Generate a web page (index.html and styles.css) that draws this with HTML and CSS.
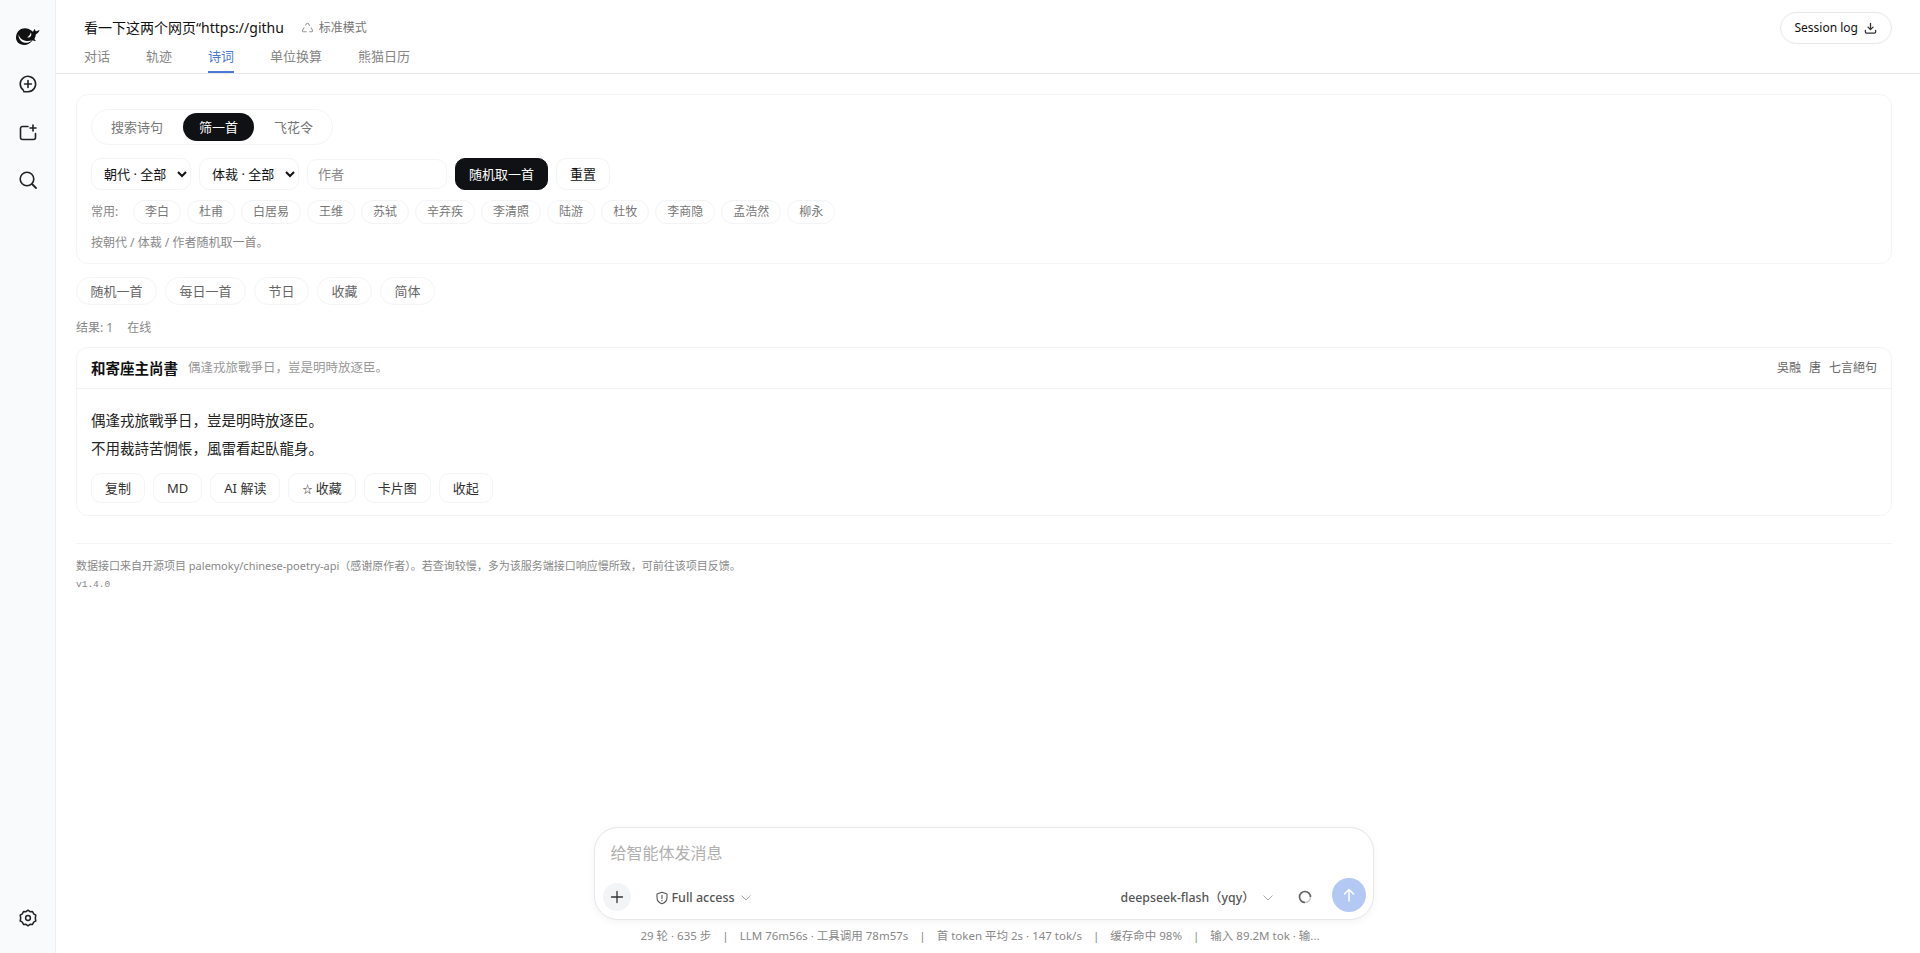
FILE: index.html

```html
<!DOCTYPE html>
<html lang="zh-CN">

<head>
    <meta charset="UTF-8">
    <meta name="viewport" content="width=device-width, initial-scale=1.0">
    <title>诗词</title>
    <link rel="stylesheet" href="styles.css">
</head>

<body>
    <aside class="sidebar">
        <svg class="logo" viewBox="0 0 24 18" width="24" height="18">
            <path d="M0 10C.5 4.500 4.500 1.200 9 1.200c2.300 0 4.300.7 6 2 .8.500 1.300 1 1.700 1.600.8-.7 1.300-1.500 1.500-2.800.8.700 1.300 1.500 1.500 2.300.8 0 2-.4 3.800-1.300-.5 2-1.700 3.500-3.600 4.300-.2 1.700-.7 3.400-1.500 4.700.4.900 1 1.500 1.800 2-1.400.3-2.600 0-3.600-.7C14.500 16.500 11.500 18 8 18 3 18-.3 14.500 0 10z" fill="#111"/>
            <path d="M2.500 7.500c1 3.800 4.500 6.500 9.500 6.500 1.500 0 2.800-.3 3.800-.8-1.800 2-4.300 2.800-6.800 2.600-3.600-.3-6.600-3.600-6.500-8.300z" fill="#f9fafb"/>
            <path d="M14.800 5.500c-.5 2.200-1.700 3.800-3.800 4.800 1.800.5 3.300-.2 4-1.600.5-1 .400-2.200-.2-3.200z" fill="#f9fafb"/>
        </svg>
        <svg class="side-icon" viewBox="0 0 20 20" width="20" height="20">
            <path d="M5.500 16.300A7.700 7.700 0 1 1 10 17.700H5.800" fill="none" stroke="#222" stroke-width="1.600" stroke-linecap="round"/>
            <path d="M10 6.600v6.800M6.600 10h6.800" stroke="#222" stroke-width="1.600" stroke-linecap="round"/>
        </svg>
        <svg class="side-icon folder" viewBox="0 0 20 20" width="20" height="20">
            <path d="M10 3.500H4.500a2 2 0 0 0-2 2v9a2 2 0 0 0 2 2h11a2 2 0 0 0 2-2V10.500" fill="none" stroke="#222" stroke-width="1.600" stroke-linecap="round"/>
            <path d="M15 2v6M12 5h6" stroke="#222" stroke-width="1.600" stroke-linecap="round"/>
        </svg>
        <svg class="side-icon" viewBox="0 0 20 20" width="20" height="20">
            <circle cx="9" cy="9" r="6.800" fill="none" stroke="#222" stroke-width="1.600"/>
            <path d="M14 14l4 4" stroke="#222" stroke-width="1.800" stroke-linecap="round"/>
        </svg>
        <svg class="side-icon gear" viewBox="0 0 20 20" width="20" height="20">
            <path d="M10 2.200l2 1.500 2.500-.1 1.200 2.200 2.100 1.400-.5 2.800.5 2.800-2.100 1.400-1.200 2.200-2.500-.1-2 1.500-2-1.500-2.500.1-1.200-2.200-2.100-1.400.5-2.800-.5-2.800 2.100-1.400 1.200-2.200 2.500.1z" fill="none" stroke="#222" stroke-width="1.500" stroke-linejoin="round"/>
            <circle cx="10" cy="10" r="2.400" fill="none" stroke="#222" stroke-width="1.500"/>
        </svg>
    </aside>

    <div class="main">
        <header class="topbar">
            <div class="topbar-left">
                <div class="title-row">
                    <span class="title">看一下这两个网页“https://githu</span>
                    <span class="mode">
                        <svg viewBox="0 0 14 14" width="13" height="13">
                            <path d="M5 3.300l1.200-1.700c.4-.5 1.200-.5 1.600 0l1.400 2.200M10.800 6.200l1.600 2.700c.4.700-.1 1.500-.8 1.500H9.300M5.800 10.400H2.400c-.7 0-1.200-.8-.8-1.500l1.700-2.800" fill="none" stroke="#999" stroke-width="1.100" stroke-linecap="round"/>
                        </svg>
                        标准模式
                    </span>
                </div>
                <nav class="tabs">
                    <a class="tab">对话</a>
                    <a class="tab">轨迹</a>
                    <a class="tab active">诗词</a>
                    <a class="tab">单位换算</a>
                    <a class="tab">熊猫日历</a>
                </nav>
            </div>
            <button class="session-btn">
                Session log
                <svg viewBox="0 0 14 14" width="13" height="13">
                    <path d="M7 1.500v6.500M4.300 5.500L7 8.200l2.700-2.700M1.500 9v1.800c0 .7.500 1.200 1.200 1.200h8.600c.7 0 1.200-.5 1.200-1.200V9" fill="none" stroke="#333" stroke-width="1.400" stroke-linecap="round" stroke-linejoin="round"/>
                </svg>
            </button>
        </header>

        <main class="content">
            <section class="card filter-card">
                <div class="segment">
                    <button class="seg-item">搜索诗句</button>
                    <button class="seg-item active">筛一首</button>
                    <button class="seg-item">飞花令</button>
                </div>

                <div class="filter-row">
                    <select class="filter-select">
                        <option>朝代 · 全部</option>
                    </select>
                    <select class="filter-select">
                        <option>体裁 · 全部</option>
                    </select>
                    <input class="author-input" type="text" placeholder="作者">
                    <button class="btn btn-dark">随机取一首</button>
                    <button class="btn">重置</button>
                </div>

                <div class="chip-row">
                    <span class="chip-label">常用:</span>
                    <button class="chip">李白</button>
                    <button class="chip">杜甫</button>
                    <button class="chip">白居易</button>
                    <button class="chip">王维</button>
                    <button class="chip">苏轼</button>
                    <button class="chip">辛弃疾</button>
                    <button class="chip">李清照</button>
                    <button class="chip">陆游</button>
                    <button class="chip">杜牧</button>
                    <button class="chip">李商隐</button>
                    <button class="chip">孟浩然</button>
                    <button class="chip">柳永</button>
                </div>

                <p class="hint">按朝代 / 体裁 / 作者随机取一首。</p>
            </section>

            <div class="quick-row">
                <button class="quick">随机一首</button>
                <button class="quick">每日一首</button>
                <button class="quick">节日</button>
                <button class="quick">收藏</button>
                <button class="quick">简体</button>
            </div>

            <div class="result-count"><span>结果: 1</span><span>在线</span></div>

            <section class="card poem-card">
                <div class="poem-head">
                    <strong class="poem-title">和寄座主尚書</strong>
                    <span class="poem-sub">偶逢戎旅戰爭日，豈是明時放逐臣。</span>
                    <span class="poem-meta"><span>吳融</span><span>唐</span><span>七言絕句</span></span>
                </div>
                <div class="poem-body">
                    <p class="poem-line">偶逢戎旅戰爭日，豈是明時放逐臣。</p>
                    <p class="poem-line">不用裁詩苦惆悵，風雷看起臥龍身。</p>
                    <div class="poem-actions">
                        <button class="btn">复制</button>
                        <button class="btn">MD</button>
                        <button class="btn">AI 解读</button>
                        <button class="btn"><span class="star">☆</span> 收藏</button>
                        <button class="btn">卡片图</button>
                        <button class="btn">收起</button>
                    </div>
                </div>
            </section>

            <footer class="source-note">
                <p>数据接口来自开源项目 palemoky/chinese-poetry-api（感谢原作者）。若查询较慢，多为该服务端接口响应慢所致，可前往该项目反馈。</p>
                <p class="version">v1.4.0</p>
            </footer>
        </main>

        <div class="composer-wrap">
            <div class="composer">
                <input class="composer-input" type="text" placeholder="给智能体发消息">
                <div class="composer-row">
                    <div class="composer-left">
                        <button class="plus-btn">
                            <svg viewBox="0 0 14 14" width="14" height="14">
                                <path d="M7 1.500v11M1.500 7h11" stroke="#333" stroke-width="1.300" stroke-linecap="round"/>
                            </svg>
                        </button>
                        <span class="access">
                            <svg viewBox="0 0 14 14" width="14" height="14">
                                <path d="M7 1.200l5 1.700v3.600c0 3-2 5.200-5 6.300-3-1.100-5-3.300-5-6.300V2.900z" fill="none" stroke="#555" stroke-width="1.100" stroke-linejoin="round"/>
                                <path d="M7 4.300v3.200M7 9.300v.5" stroke="#555" stroke-width="1.100" stroke-linecap="round"/>
                            </svg>
                            Full access
                            <svg class="chev" viewBox="0 0 10 6" width="10" height="6">
                                <path d="M.5.500L5 5 9.500.500" fill="none" stroke="#aaa" stroke-width="1"/>
                            </svg>
                        </span>
                    </div>
                    <div class="composer-right">
                        <span class="model">
                            deepseek-flash（yqy）
                            <svg class="chev" viewBox="0 0 10 6" width="10" height="6">
                                <path d="M.5.500L5 5 9.500.500" fill="none" stroke="#aaa" stroke-width="1"/>
                            </svg>
                        </span>
                        <svg class="spinner" viewBox="0 0 14 14" width="14" height="14">
                            <circle cx="7" cy="7" r="5.500" fill="none" stroke="#ccc" stroke-width="1.600"/>
                            <path d="M12.500 7A5.500 5.500 0 1 0 7 12.500" fill="none" stroke="#666" stroke-width="1.600"/>
                        </svg>
                        <button class="send-btn">
                            <svg viewBox="0 0 16 16" width="16" height="16">
                                <path d="M8 14V2.500M3.500 7L8 2.500 12.500 7" fill="none" stroke="#fff" stroke-width="1.500" stroke-linecap="round" stroke-linejoin="round"/>
                            </svg>
                        </button>
                    </div>
                </div>
            </div>
            <div class="stats">
                <span>29 轮 · 635 步</span><i>|</i>
                <span>LLM 76m56s · 工具调用 78m57s</span><i>|</i>
                <span>首 token 平均 2s · 147 tok/s</span><i>|</i>
                <span>缓存命中 98%</span><i>|</i>
                <span>输入 89.2M tok · 输...</span>
            </div>
        </div>
    </div>
</body>

</html>
```

FILE: styles.css

```css
* {
    box-sizing: border-box;
}

html,
body {
    height: 100%;
}

body {
    margin: 0;
    display: flex;
    overflow: hidden;
    font: 13px/20px "Noto Sans", "Noto Sans CJK SC", sans-serif;
    color: #111;
    background: #fff;
}

button,
input,
select {
    font: inherit;
    color: inherit;
}

button {
    cursor: pointer;
}

p {
    margin: 0;
}

/* left rail */
.sidebar {
    width: 56px;
    flex: none;
    display: flex;
    flex-direction: column;
    align-items: center;
    padding-top: 27px;
    background: #f9fafb;
    border-right: 1px solid #eceef0;
}

.logo {
    margin-bottom: 29px;
}

.side-icon {
    margin-bottom: 29px;
}

.side-icon.folder {
    margin-bottom: 27px;
}

.side-icon.gear {
    margin-top: auto;
    margin-bottom: 25px;
}

.main {
    flex: 1;
    min-width: 0;
    display: flex;
    flex-direction: column;
}

/* header */
.topbar {
    height: 74px;
    flex: none;
    display: flex;
    justify-content: space-between;
    padding: 0 28px 0 28px;
    border-bottom: 1px solid #e5e7eb;
}

.topbar-left {
    padding-top: 18px;
}

.title-row {
    display: flex;
    align-items: center;
    height: 20px;
}

.title {
    font-size: 14px;
    color: #111;
}

.mode {
    display: flex;
    align-items: center;
    gap: 5px;
    margin-left: 17px;
    font-size: 12px;
    color: #777;
}

.tabs {
    display: flex;
    gap: 36px;
}

.tab {
    padding: 8px 0 5px;
    font-size: 13px;
    color: #858585;
    border-bottom: 2px solid transparent;
}

.tab.active {
    color: #4a7ad6;
    border-bottom-color: #4a7ad6;
}

.session-btn {
    align-self: flex-start;
    display: flex;
    align-items: center;
    gap: 6px;
    height: 32px;
    margin-top: 12px;
    padding: 0 14px;
    font-size: 12px;
    background: #fff;
    border: 1px solid #e5e7eb;
    border-radius: 16px;
}

/* content */
.content {
    flex: 1;
    min-height: 0;
    padding: 20px 28px 0 20px;
}

.card {
    background: #fff;
    border: 1px solid #f3f4f6;
    border-radius: 12px;
}

.filter-card {
    padding: 14px 14px 11px;
}

.segment {
    display: inline-flex;
    gap: 4px;
    height: 36px;
    padding: 3px;
    background: #fff;
    border: 1px solid #f3f4f6;
    border-radius: 18px;
    vertical-align: top;
}

.seg-item {
    padding: 0 16px;
    color: #777;
    background: none;
    border: 0;
    border-radius: 15px;
}

.seg-item.active {
    color: #fff;
    background: #0f1114;
}

.filter-row {
    display: flex;
    gap: 8px;
    height: 32px;
    margin-top: 13px;
}

.filter-select {
    width: 100px;
    padding: 0 4px 0 8px;
    background: #fff;
    border: 1px solid #f3f4f6;
    border-radius: 10px;
}

.author-input {
    width: 140px;
    height: 30px;
    margin-top: 1px;
    padding: 0 10px;
    border: 1px solid #f3f4f6;
    border-radius: 10px;
    outline: none;
}

.author-input::placeholder {
    color: #888;
}

.btn {
    height: 32px;
    padding: 0 13px;
    white-space: nowrap;
    background: #fff;
    border: 1px solid #f3f4f6;
    border-radius: 10px;
}

.btn-dark {
    color: #fff;
    background: #0f1114;
    border-color: #0f1114;
}

.chip-row {
    display: flex;
    align-items: center;
    gap: 6px;
    height: 24px;
    margin-top: 10px;
}

.chip-label {
    width: 36px;
    font-size: 12px;
    color: #888;
}

.chip {
    height: 24px;
    padding: 0 11px;
    font-size: 12px;
    line-height: 22px;
    color: #777;
    background: #fff;
    border: 1px solid #f3f4f6;
    border-radius: 12px;
}

.hint {
    margin-top: 10px;
    font-size: 12px;
    line-height: 18px;
    color: #888;
}

.quick-row {
    display: flex;
    gap: 8px;
    margin-top: 13px;
}

.quick {
    height: 28px;
    padding: 0 13.500px;
    color: #666;
    background: #fff;
    border: 1px solid #f3f4f6;
    border-radius: 14px;
}

.result-count {
    display: flex;
    gap: 14px;
    margin-top: 14px;
    font-size: 12px;
    line-height: 18px;
    color: #888;
}

.poem-card {
    margin-top: 10px;
}

.poem-head {
    display: flex;
    align-items: center;
    height: 41px;
    padding: 0 14px;
    border-bottom: 1px solid #f3f4f6;
}

.poem-title {
    font-size: 14.500px;
    font-weight: 700;
}

.poem-sub {
    margin-left: 10px;
    font-size: 12.500px;
    color: #999;
}

.poem-meta {
    display: flex;
    gap: 8px;
    margin-left: auto;
    font-size: 12px;
    color: #666;
}

.poem-body {
    padding: 17px 14px 12px;
}

.poem-line {
    font-size: 14.500px;
    line-height: 28px;
    color: #222;
}

.poem-actions {
    display: flex;
    gap: 8px;
    margin-top: 11px;
}

.poem-actions .btn {
    height: 30px;
    color: #333;
}

.star {
    font-size: 10px;
}

.source-note {
    margin-top: 27px;
    padding-top: 14px;
    border-top: 1px solid #f3f4f6;
    font-size: 11px;
    line-height: 16px;
    color: #888;
}

.version {
    margin-top: 3px;
    font-family: "Liberation Mono", monospace;
    font-size: 9.500px;
}

/* composer */
.composer-wrap {
    flex: none;
    padding: 0 9px 8px 0;
}

.composer {
    width: 780px;
    height: 93px;
    margin: 0 auto;
    padding: 13px 7px 7px 8px;
    background: #fff;
    border: 1px solid #e5e7eb;
    border-radius: 24px;
    box-shadow: 0 2px 8px rgba(0, 0, 0, .05);
}

.composer-input {
    display: block;
    width: 100%;
    height: 24px;
    padding: 0 8px;
    font-size: 16px;
    border: 0;
    outline: none;
}

.composer-input::placeholder {
    color: #b0b0b0;
}

.composer-row {
    display: flex;
    justify-content: space-between;
    align-items: center;
    height: 34px;
    margin-top: 13px;
}

.composer-left,
.composer-right,
.access,
.model {
    display: flex;
    align-items: center;
}

.composer-left {
    margin-top: 4px;
}

.plus-btn {
    display: flex;
    align-items: center;
    justify-content: center;
    width: 28px;
    height: 28px;
    padding: 0;
    background: #f3f4f6;
    border: 0;
    border-radius: 50%;
}

.access {
    gap: 3px;
    margin-left: 24px;
    padding-top: 1px;
    font-size: 12.500px;
    font-weight: 500;
    color: #555;
}

.model {
    margin-top: 6px;
    font-size: 12.300px;
    font-weight: 500;
    color: #555;
}

.chev {
    margin-left: 3px;
}

.model .chev {
    margin-left: 8px;
}

.spinner {
    margin: 4px 0 0 25px;
}

.send-btn {
    display: flex;
    align-items: center;
    justify-content: center;
    width: 34px;
    height: 34px;
    margin-left: 20px;
    padding: 0;
    background: #b3c8f2;
    border: 0;
    border-radius: 50%;
}

.stats {
    display: flex;
    justify-content: center;
    gap: 11px;
    margin-top: 7px;
    padding-right: 7px;
    font-size: 11.500px;
    line-height: 18px;
    color: #888;
}

.stats i {
    font-style: normal;
}
```
